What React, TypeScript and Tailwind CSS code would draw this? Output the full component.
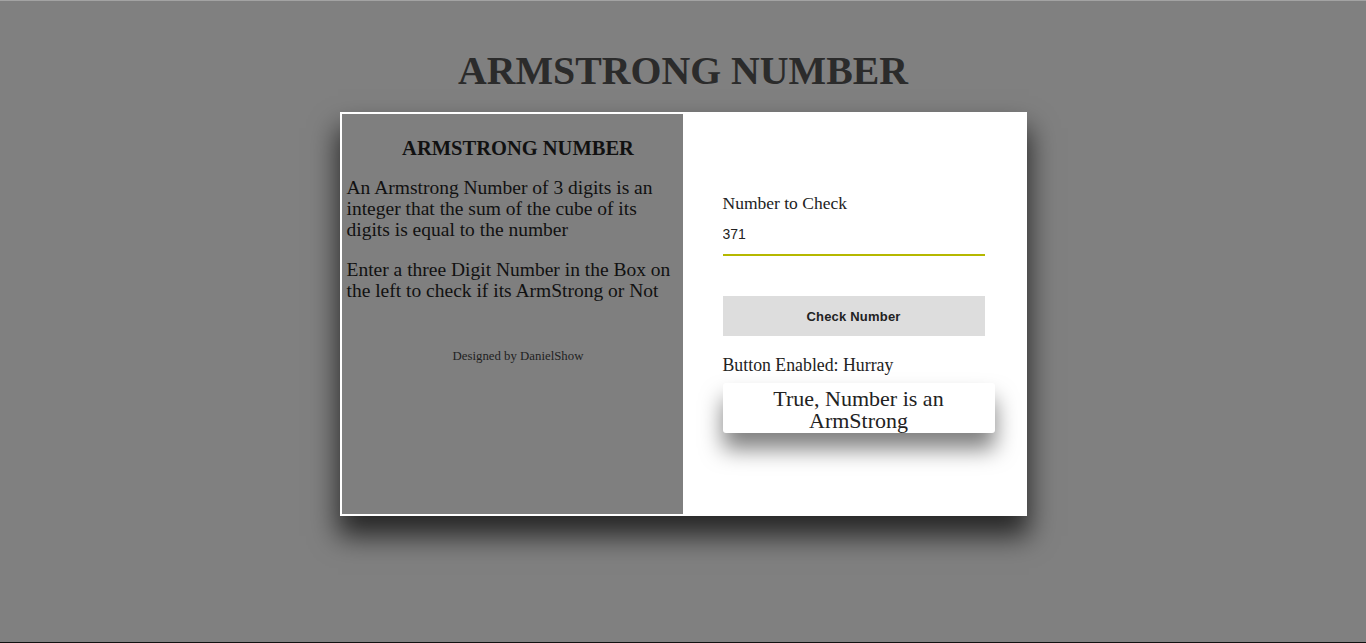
import React, { useState } from 'react';

const serif = { fontFamily: 'Georgia, "Liberation Serif", serif' };

const App: React.FC = () => {
  const [value, setValue] = useState('371');

  const digits = value.split('').map(Number);
  const sum = digits.reduce((acc, d) => acc + d * d * d, 0);
  const isArmstrong = value.length === 3 && sum === Number(value);

  return (
    <div
      className="h-[643px] bg-[#808080] border-t border-t-[#a3a3a3] border-b border-b-[#111] overflow-hidden"
      style={serif}
    >
      <h1 className="pt-[47px] text-center text-[39.8px] leading-[46px] font-bold text-[#2b2b2b]">
        ARMSTRONG NUMBER
      </h1>

      <div className="mx-auto mt-[18px] flex w-[687px] h-[404px] bg-white shadow-[0_18px_26px_2px_rgba(0,0,0,0.7)]">
        {/* info panel */}
        <div className="w-[345px] border-2 border-white bg-[#7f7f7f] px-[5px] text-[#111]">
          <h3 className="pt-[22px] pl-[12px] text-center text-[20.5px] leading-[24px] font-bold">ARMSTRONG NUMBER</h3>
          <p className="mt-[17px] text-[19.5px] leading-[21px]">
            An Armstrong Number of 3 digits is an integer that the sum of the cube of its digits is equal to the number
          </p>
          <p className="mt-[19px] text-[19.5px] leading-[21px]">
            Enter a three Digit Number in the Box on the left to check if its ArmStrong or Not
          </p>
          <p className="mt-[47px] pl-[12px] text-center text-[12.8px] leading-[16px] text-[#222]">Designed by DanielShow</p>
        </div>

        {/* checker */}
        <div className="flex-1 pl-[38px] pt-[81px] text-[#222]">
          <label className="block text-[17.5px] leading-[20px]">Number to Check</label>
          <input
            value={value}
            onChange={(e) => setValue(e.target.value)}
            className="mt-px block h-[42px] w-[262px] border-b-2 border-[#b5b800] pt-[10px] pb-[10px] text-[14px] leading-[20px] text-[#222] outline-none"
            style={{ fontFamily: '"Liberation Sans", Arial, sans-serif' }}
          />
          <button
            className="mt-[40px] block h-[40px] w-[262px] bg-[#dddddd] pt-px text-[13px] font-bold tracking-[0.2px] text-[#222]"
            style={{ fontFamily: '"Liberation Sans", Arial, sans-serif' }}
          >
            Check Number
          </button>
          <p className="mt-[19px] text-[17.8px] leading-[20px]">Button Enabled: Hurray</p>
          <div className="mt-[8px] w-[272px] rounded-[3px] bg-white px-3 pt-[5px] pb-[1px] text-center text-[22px] leading-[22px] text-[#222] shadow-[0_16px_22px_rgba(0,0,0,0.5)]">
            {isArmstrong ? 'True, Number is an ArmStrong' : 'False, Number is not an ArmStrong'}
          </div>
        </div>
      </div>
    </div>
  );
};

export default App;
